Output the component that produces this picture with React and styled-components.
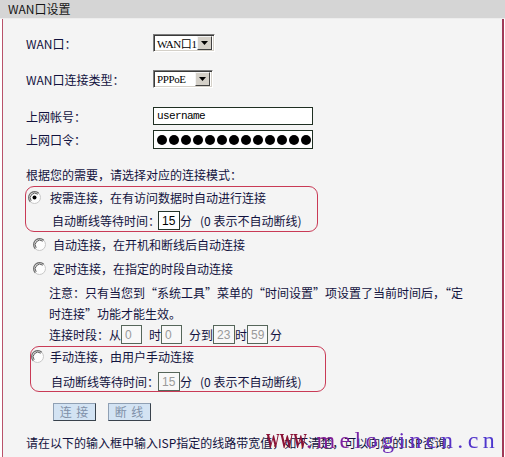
import React from "react";
import styled, { createGlobalStyle } from "styled-components";

const Global = createGlobalStyle`
  html, body { margin: 0; padding: 0; background: #fff; }
  body {
    font-family: "Noto Sans CJK SC", "Noto Sans", sans-serif;
    font-size: 12px;
    color: #12123e;
  }
`;

const Page = styled.div`
  position: relative;
  width: 505px;
  height: 457px;
  overflow: hidden;
  background: #fff;
  display: flex;
  flex-direction: column;
`;

const Header = styled.div`
  height: 18px;
  line-height: 18px;
  padding-left: 8px;
  background: #d5d5d5;
  border-bottom: 1px solid #ededed;
  color: #151515;
  font-size: 12px;
`;

const Panel = styled.div`
  flex: 1;
  margin-left: 2px;
  margin-right: 1px;
  border-left: 1px solid #b9526a;
  border-right: 2px solid #a03a58;
  background: #f4f4f4;
  padding-left: 23px;
  display: flex;
  flex-direction: column;
  overflow: hidden;
`;

const Line = styled.div`
  display: flex;
  align-items: center;
  height: ${(p) => p.$h || 16}px;
  margin-top: ${(p) => p.$mt || 0}px;
  padding-left: ${(p) => p.$pl || 0}px;
  gap: ${(p) => p.$gap || 0}px;
  white-space: nowrap;
`;

const Label = styled.span`
  width: 127px;
  flex: none;
`;

const SelectBox = styled.div`
  width: ${(p) => p.$w}px;
  height: 18px;
  box-sizing: border-box;
  border: 1px solid;
  border-color: #7c7c7c #ffffff #ffffff #7c7c7c;
  box-shadow: inset 1px 1px 0 #3a3a3a, inset -1px -1px 0 #d4d0c8;
  background: #fff;
  display: flex;
  align-items: center;
  justify-content: space-between;
  padding: 0 2px 0 3px;
  color: #000;
  font-family: "Liberation Serif", "Noto Sans CJK SC", serif;
  font-size: 11px;
  letter-spacing: -0.4px;
`;

const SelectArrow = styled.span`
  width: 15px;
  height: 14px;
  box-sizing: border-box;
  background: #d4d0c8;
  border: 1px solid;
  border-color: #f4f4f4 #404040 #404040 #f4f4f4;
  display: flex;
  align-items: center;
  justify-content: center;
  flex: none;
`;

const TextField = styled.div`
  width: 160px;
  height: ${(p) => p.$h || 18}px;
  box-sizing: border-box;
  border: 1px solid #1f2f22;
  background: #fff;
  display: flex;
  align-items: center;
  padding-left: 3px;
  gap: 2px;
`;

const MonoText = styled.span`
  font-family: "Liberation Mono", monospace;
  font-size: 11px;
  letter-spacing: -0.6px;
  color: #000;
`;

const Dot = styled.span`
  width: 10px;
  height: 10px;
  border-radius: 50%;
  background: #000;
  flex: none;
`;

const SmallInput = styled.div`
  width: ${(p) => p.$w || 21}px;
  height: 19px;
  box-sizing: border-box;
  border: 1px solid ${(p) => (p.$active ? "#24342a" : "#56665a")};
  background: ${(p) => (p.$active ? "#fff" : "#f8f8f8")};
  color: ${(p) => (p.$active ? "#000" : "#9a9a9a")};
  display: flex;
  align-items: center;
  padding-left: 3px;
  margin: 0 ${(p) => p.$mr || 0}px 0 ${(p) => p.$ml || 0}px;
  font-family: "Liberation Sans", "Noto Sans", sans-serif;
  font-size: 12px;
  flex: none;
`;

const ModeBox = styled.div`
  width: ${(p) => p.$w}px;
  box-sizing: border-box;
  margin-left: ${(p) => p.$ml}px;
  margin-top: ${(p) => p.$mt}px;
  border: 1px solid #c93a56;
  border-radius: 9px;
  padding: ${(p) => p.$pt}px 0 ${(p) => p.$pb}px 0;
  display: flex;
  flex-direction: column;
`;

const Note = styled.div`
  margin-top: ${(p) => p.$mt}px;
  padding-left: ${(p) => p.$pl}px;
  line-height: 21px;
  white-space: nowrap;
`;

const Gap = styled.span`
  display: inline-block;
  width: ${(p) => p.$w}px;
`;

const Btn = styled.button`
  width: 43px;
  height: 18px;
  box-sizing: border-box;
  padding: 0;
  background: #d3e3f3;
  border: 1px solid;
  border-color: #8fa0b4 #39424c #39424c #8fa0b4;
  color: #8090a8;
  font-family: "Noto Sans CJK SC", sans-serif;
  font-size: 12px;
  letter-spacing: 1px;
  line-height: 16px;
`;

const Watermark = styled.div`
  position: absolute;
  left: 266px;
  top: 427px;
  display: flex;
  align-items: baseline;
  font-family: "Liberation Serif", serif;
  pointer-events: none;
`;

const WWW = styled.span`
  display: inline-block;
  font-size: 22px;
  font-weight: bold;
  color: #8a1236;
  transform: scaleX(0.62);
  transform-origin: left center;
  width: 40px;
`;

const Domain = styled.span`
  font-size: 24px;
  letter-spacing: 4.4px;
  background: linear-gradient(90deg, #8a1a8a 0%, #6a2ab8 45%, #4a38d0 100%);
  -webkit-background-clip: text;
  background-clip: text;
  color: transparent;
`;

const Radio = ({ checked, ml = 0, gap = 8 }) => (
  <svg
    width="13"
    height="13"
    viewBox="0 0 13 13"
    style={{ marginLeft: ml, marginRight: gap, flex: "none" }}
  >
    <circle cx="6.5" cy="6.5" r="6" fill="#fdfdfd" stroke="#c8c8c8" />
    <path d="M2.26 10.74 A6 6 0 0 1 10.74 2.26" stroke="#6e6e6e" fill="none" strokeWidth="1.2" />
    <path d="M3.2 9.8 A4.7 4.7 0 0 1 9.8 3.2" stroke="#303030" fill="none" strokeWidth="0.8" />
    {checked && <circle cx="6.5" cy="6.5" r="2" fill="#000" />}
  </svg>
);

const Arrow = () => (
  <svg width="7" height="4" viewBox="0 0 7 4">
    <path d="M0 0 H7 L3.5 4 Z" fill="#000" />
  </svg>
);

export default function App() {
  return (
    <>
      <Global />
      <Page>
        <Header>WAN口设置</Header>
        <Panel>
          <Line $h={18} $mt={15}>
            <Label>WAN口：</Label>
            <SelectBox $w={62}>
              <span>WAN口1</span>
              <SelectArrow><Arrow /></SelectArrow>
            </SelectBox>
          </Line>
          <Line $h={18} $mt={18}>
            <Label>WAN口连接类型：</Label>
            <SelectBox $w={60}>
              <span>PPPoE</span>
              <SelectArrow><Arrow /></SelectArrow>
            </SelectBox>
          </Line>
          <Line $h={18} $mt={19}>
            <Label>上网帐号：</Label>
            <TextField>
              <MonoText>username</MonoText>
            </TextField>
          </Line>
          <Line $h={19} $mt={5}>
            <Label>上网口令：</Label>
            <TextField $h={19}>
              {Array.from({ length: 13 }).map((_, i) => (
                <Dot key={i} />
              ))}
            </TextField>
          </Line>
          <Line $h={16} $mt={17}>根据您的需要，请选择对应的连接模式：</Line>

          <ModeBox $w={293} $ml={-1} $mt={4} $pt={2} $pb={1}>
            <Line $h={16} $pl={2}>
              <Radio checked gap={9} />
              按需连接，在有访问数据时自动进行连接
            </Line>
            <Line $h={19} $mt={6} $pl={26}>
              自动断线等待时间：
              <SmallInput $w={22} $active $ml={-2}>15</SmallInput>
              分<Gap $w={8} />(0 表示不自动断线)
            </Line>
          </ModeBox>

          <Line $h={16} $mt={4} $pl={7}>
            <Radio gap={7} />
            自动连接，在开机和断线后自动连接
          </Line>
          <Line $h={16} $mt={8} $pl={7}>
            <Radio gap={7} />
            定时连接，在指定的时段自动连接
          </Line>
          <Note $mt={6} $pl={23}>
            注意：只有当您到“系统工具”菜单的“时间设置”项设置了当前时间后，“定
            <br />
            时连接”功能才能生效。
          </Note>
          <Line $h={19} $mt={1} $pl={23}>
            连接时段：从
            <SmallInput $mr={7}>0</SmallInput>
            时<SmallInput>0</SmallInput>
            <Gap $w={7} />分到
            <SmallInput $w={22}>23</SmallInput>
            时<SmallInput>59</SmallInput>
            <Gap $w={2} />分
          </Line>

          <ModeBox $w={296} $ml={4} $mt={2} $pt={1} $pb={0}>
            <Line $h={16}>
              <Radio gap={6} />
              手动连接，由用户手动连接
            </Line>
            <Line $h={19} $mt={8} $pl={20}>
              自动断线等待时间：
              <SmallInput $w={22} $ml={-1}>15</SmallInput>
              分<Gap $w={8} />(0 表示不自动断线)
            </Line>
          </ModeBox>

          <Line $h={18} $mt={11} $pl={27} $gap={12}>
            <Btn disabled>连 接</Btn>
            <Btn disabled>断 线</Btn>
          </Line>
          <Line $h={16} $mt={13}>
            请在以下的输入框中输入ISP指定的线路带宽值，如不清楚，可以向您的ISP咨询。
          </Line>
        </Panel>
        <Watermark>
          <WWW>WWW</WWW>
          <Domain>.melogincn.cn</Domain>
        </Watermark>
      </Page>
    </>
  );
}
